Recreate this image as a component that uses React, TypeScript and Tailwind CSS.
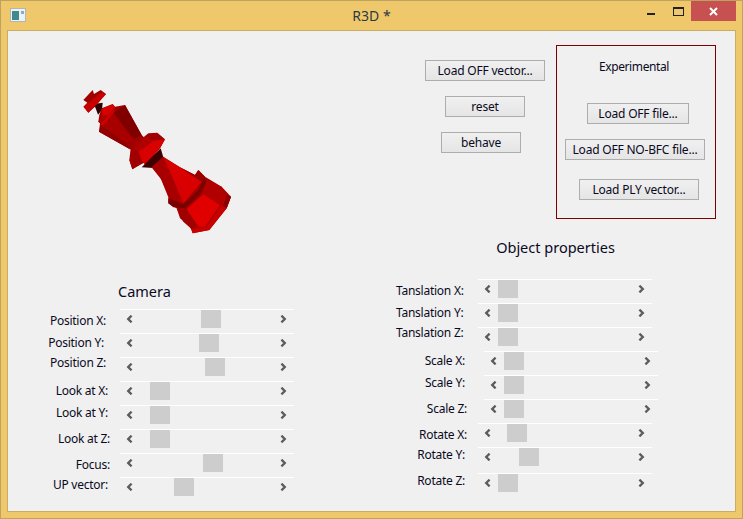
const FONT = "font-['Noto_Sans',sans-serif]";

type Row = { label: string; thumb: number; left: number; w: number; top: number };

const camera: Row[] = [
  { label: "Position X:", thumb: 81, left: 0, w: 98, top: 0 },
  { label: "Position Y:", thumb: 79, left: 0, w: 96, top: -2 },
  { label: "Position Z:", thumb: 85, left: 0, w: 98, top: -6 },
  { label: "Look at X:", thumb: 30, left: 0, w: 100, top: -2 },
  { label: "Look at Y:", thumb: 30, left: 0, w: 100, top: -4 },
  { label: "Look at Z:", thumb: 30, left: 0, w: 102, top: -2 },
  { label: "Focus:", thumb: 83, left: 0, w: 102, top: 0 },
  { label: "UP vector:", thumb: 54, left: 0, w: 100, top: -4 },
];

const objectRows: Row[] = [
  { label: "Tanslation X:", thumb: 20, left: 0, w: 67, top: 0 },
  { label: "Tanslation Y:", thumb: 20, left: 0, w: 65, top: -2 },
  { label: "Tanslation Z:", thumb: 20, left: 0, w: 67, top: -6 },
  { label: "Scale X:", thumb: 20, left: 6, w: 69, top: -2 },
  { label: "Scale Y:", thumb: 20, left: 6, w: 69, top: -4 },
  { label: "Scale Z:", thumb: 20, left: 6, w: 71, top: -2 },
  { label: "Rotate X:", thumb: 29, left: 0, w: 71, top: 0 },
  { label: "Rotate Y:", thumb: 41, left: 0, w: 69, top: -4 },
  { label: "Rotate Z:", thumb: 20, left: 0, w: 69, top: -4 },
];

function Arrow({ dir }: { dir: "l" | "r" }) {
  return (
    <svg width="7" height="8" viewBox="0 0 7 8" className="shrink-0">
      <path
        d={dir === "l" ? "M5.6 0.6 L2.2 4 L5.6 7.4" : "M1.4 0.6 L4.8 4 L1.4 7.4"}
        fill="none"
        stroke="#5c5c5c"
        strokeWidth="2.3"
      />
    </svg>
  );
}

function Slider({ thumb }: { thumb: number }) {
  return (
    <div className="relative flex h-6 w-[174px] shrink-0 items-center justify-between border-t border-white pl-[6px] pr-[7px] pb-[5px]">
      <Arrow dir="l" />
      <Arrow dir="r" />
      <div className="absolute top-0 h-[18px] w-5 bg-[#cdcdcd]" style={{ left: thumb }} />
    </div>
  );
}

function Btn({ children, className }: { children: string; className: string }) {
  return (
    <button className={`block h-[21px] border border-[#adadad] bg-gradient-to-b from-[#f0f0f0] to-[#e5e5e5] text-center text-[12px] leading-[18px] tracking-[-0.2px] text-[#0a0a1e] ${className}`}>
      {children}
    </button>
  );
}

function Chess() {
  return (
    <svg width="170" height="160" viewBox="0 0 510 480" className="block">
      {/* neck of cross */}
      <polygon points="72,72 98,68 96,90 84,104 78,88" fill="#300000" />
      {/* cross */}
      <polygon points="40,60 68,30 72,42 92,30 108,42 75,80 55,98 40,80 52,68" fill="#a00000" />
      <polygon points="42,80 92,38 108,42 55,98" fill="#c80000" />
      {/* head */}
      <polygon points="85,125 88,105 95,85 128,72 135,80 165,75 215,165 225,175 190,210 180,208 87,155 90,130" fill="#a00000" />
      <polygon points="130,98 165,75 215,165 190,178" fill="#800000" />
      <polygon points="90,140 130,100 190,178 172,192" fill="#a80000" />
      <polygon points="87,155 92,136 172,192 180,208" fill="#900000" />
      <polygon points="95,88 128,73 135,82 115,105 97,105" fill="#d80000" />
      <polygon points="85,125 97,105 115,105 92,130" fill="#b00000" />
      <polygon points="92,132 135,84 130,100 98,138" fill="#d00000" />
      {/* collar */}
      <polygon points="182,205 225,168 235,160 262,158 285,178 270,205 240,240 215,252 187,268 178,240" fill="#a00000" />
      <polygon points="205,215 250,182 285,178 270,205 225,255 215,240" fill="#d80000" />
      <polygon points="178,240 205,215 215,250 187,268" fill="#a00000" />
      <polygon points="190,205 225,172 250,182 205,215" fill="#b00000" />
      {/* neck */}
      <polygon points="215,262 272,205 280,232 250,264" fill="#3c0000" />
      {/* lower body */}
      <polygon points="245,262 280,230 330,262 375,285 385,270 405,290 455,320 483,350 470,385 418,450 368,460 360,440 330,415 320,385 295,370 295,352 270,290" fill="#a80000" />
      <polygon points="245,262 280,232 300,275 340,370 300,355 275,300" fill="#a80000" />
      <polygon points="280,232 330,262 395,305 340,370 300,275" fill="#d80000" />
      <polygon points="330,262 375,285 385,270 405,290 395,305" fill="#980000" />
      <polygon points="350,388 400,342 450,375 405,440 385,440" fill="#e00000" />
      <polygon points="405,300 455,320 470,350 450,375 400,342" fill="#b00000" />
      <polygon points="320,385 347,385 385,440 368,450 340,425" fill="#a00000" />
      <polygon points="295,355 340,372 385,330 403,292 410,305 390,345 345,385 310,382 295,370" fill="#7c0000" />
      <polygon points="470,345 483,350 470,385 418,450 368,460 365,447 410,440 455,375" fill="#c80000" />
      <polygon points="470,345 483,350 470,385 458,378" fill="#8c0000" />
    </svg>
  );
}

export default function App() {
  return (
    <div className={`flex h-[519px] w-[743px] flex-col overflow-hidden border border-[#bda35f] bg-[#f0c86c] ${FONT}`}>
      <div className="relative flex h-[29px] shrink-0 items-center justify-center text-[14px] text-[#2a3a44]">
        <svg width="16" height="14" viewBox="0 0 16 14" className="absolute left-[9px] top-[7px]">
          <rect x="0.5" y="0.5" width="15" height="13" fill="#eef2f4" stroke="#b5b5b5" />
          <rect x="2" y="3" width="7" height="9" fill="#3f8a8c" />
          <rect x="11" y="3" width="3" height="3" fill="#7fb3c0" />
        </svg>
        <span>R3D *</span>
        <div className="absolute left-[646px] top-[12px] h-[2px] w-2 bg-[#222]" />
        <div className="absolute left-[672px] top-[6px] h-[9px] w-[11px] border border-t-2 border-[#222]" />
        <div className="absolute left-[690px] top-0 flex h-5 w-[45px] items-center justify-center bg-[#c75050]">
          <svg width="9" height="9" viewBox="0 0 9 9">
            <path d="M1 1 L8 8 M8 1 L1 8" stroke="#fff" strokeWidth="2" />
          </svg>
        </div>
      </div>

      <div className="ml-[6px] flex h-[482px] w-[729px] shrink-0 border border-[#c9ad66] bg-[#f0f0f0]">
        {/* left column */}
        <div className="w-[388px] shrink-0">
          <div className="ml-[62px] mt-[49px] h-[160px]">
            <Chess />
          </div>
          <div className="mt-[41px] ml-[110px] h-[28px] text-[14.5px] leading-5 text-[#0a0a1e]">Camera</div>
          {camera.map((r) => (
            <div key={r.label} className="flex h-6">
              <div className="shrink-0 text-right text-[12px] leading-6 tracking-[-0.25px] whitespace-nowrap text-[#0a0a1e]" style={{ width: r.w, marginRight: 112 - r.w, marginTop: r.top }}>
                {r.label}
              </div>
              <Slider thumb={r.thumb} />
            </div>
          ))}
        </div>

        {/* right column */}
        <div className="min-w-0 flex-1">
          <div className="flex h-[206px]">
            <div className="w-[160px] shrink-0 pt-[29px]">
              <Btn className="ml-[29px] w-[120px]">Load OFF vector...</Btn>
              <Btn className="ml-[49px] mt-[15px] w-20">reset</Btn>
              <Btn className="ml-[45px] mt-[15px] w-20">behave</Btn>
            </div>
            <div className="mt-[14px] h-[174px] w-40 shrink-0 border border-[#800000]">
              <div className="mt-[12px] mr-[4px] text-center text-[12px] leading-[18px] tracking-[-0.4px] text-[#0a0a1e]">Experimental</div>
              <Btn className="ml-[30px] mt-[27px] w-[102px]">Load OFF file...</Btn>
              <Btn className="ml-2 mt-[15px] w-[140px]">Load OFF NO-BFC file...</Btn>
              <Btn className="ml-[22px] mt-[19px] w-[120px]">Load PLY vector...</Btn>
            </div>
          </div>
          <div className="ml-[47px] h-[42px] w-[225px] text-center text-[14.5px] leading-5 text-[#0a0a1e]">Object properties</div>
          <div>
            {objectRows.map((r, i) => (
              <div key={r.label} className={`flex h-6 ${i === 8 ? "mt-[2px]" : ""}`}>
                <div className="shrink-0 text-right text-[12px] leading-6 tracking-[-0.25px] whitespace-nowrap text-[#0a0a1e]" style={{ width: r.w, marginTop: r.top, marginRight: 82 - r.w + r.left }}>
                  {r.label}
                </div>
                <Slider thumb={r.thumb} />
              </div>
            ))}
          </div>
        </div>
      </div>
    </div>
  );
}
